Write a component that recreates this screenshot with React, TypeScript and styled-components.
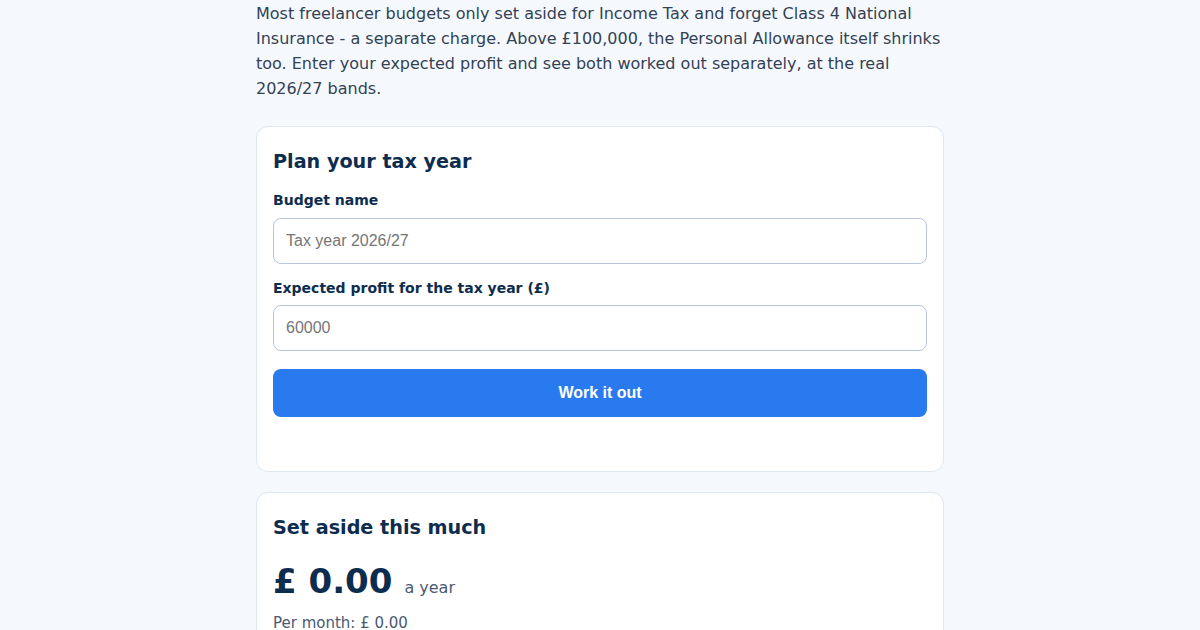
import styled, { createGlobalStyle } from 'styled-components'

const GlobalStyle = createGlobalStyle`
  * {
    box-sizing: border-box;
  }
  body {
    margin: 0;
    background: #f5f9fd;
    font-family: 'DejaVu Sans', sans-serif;
    color: #334155;
  }
`

function App() {
  return (
    <>
      <GlobalStyle />
      <PageStyled>
        <IntroStyled>
          Most freelancer budgets only set aside for Income Tax and forget Class 4 National
          Insurance - a separate charge. Above £100,000, the Personal Allowance itself shrinks
          too. Enter your expected profit and see both worked out separately, at the real
          2026/27 bands.
        </IntroStyled>

        <CardStyled $bottom={54}>
          <CardTitleStyled>Plan your tax year</CardTitleStyled>
          <FieldStyled>
            <LabelStyled htmlFor='budget-name'>Budget name</LabelStyled>
            <InputStyled id='budget-name' type='text' placeholder='Tax year 2026/27' />
          </FieldStyled>
          <FieldStyled>
            <LabelStyled htmlFor='profit'>Expected profit for the tax year (£)</LabelStyled>
            <InputStyled id='profit' type='number' placeholder='60000' />
          </FieldStyled>
          <ButtonStyled type='button'>Work it out</ButtonStyled>
        </CardStyled>

        <CardStyled $bottom={20}>
          <CardTitleStyled>Set aside this much</CardTitleStyled>
          <TotalRowStyled>
            <AmountStyled>£ 0.00</AmountStyled>
            <PeriodStyled>a year</PeriodStyled>
          </TotalRowStyled>
          <SubLineStyled>Per month: £ 0.00</SubLineStyled>
        </CardStyled>
      </PageStyled>
    </>
  )
}

const PageStyled = styled.main`
  width: 688px;
  margin: 0 auto;
  padding-top: 1px;
  display: flex;
  flex-direction: column;
  gap: 20px;
`

const IntroStyled = styled.p`
  margin: 0 0 5px;
  font-size: 16px;
  line-height: 25px;
  color: #334155;
`

const CardStyled = styled.section<{ $bottom: number }>`
  background: #ffffff;
  border: 1px solid #dfe7f1;
  border-radius: 12px;
  padding: 21px 16px ${(p) => p.$bottom}px;
  display: flex;
  flex-direction: column;
`

const CardTitleStyled = styled.h2`
  margin: 0 0 14px;
  font-size: 19.2px;
  line-height: 28px;
  font-weight: 700;
  color: #0e2d4e;
`

const FieldStyled = styled.div`
  display: flex;
  flex-direction: column;
  margin-bottom: 14px;

  & + & {
    margin-bottom: 18px;
  }

  & + & > label {
    margin-bottom: 7px;
  }
`

const LabelStyled = styled.label`
  font-size: 14px;
  line-height: 20px;
  font-weight: 700;
  color: #0e2d4e;
  margin-bottom: 8px;
`

const InputStyled = styled.input`
  height: 46px;
  padding: 0 12px;
  border: 1px solid #b9c5da;
  border-radius: 8px;
  background: #ffffff;
  font-family: 'Liberation Sans', Arial, sans-serif;
  font-size: 16px;
  color: #1e293b;
  outline: none;
  appearance: textfield;

  &::placeholder {
    color: #767676;
  }

  &::-webkit-outer-spin-button,
  &::-webkit-inner-spin-button {
    -webkit-appearance: none;
    margin: 0;
  }
`

const ButtonStyled = styled.button`
  height: 48px;
  border: none;
  border-radius: 8px;
  background: #2a7aef;
  color: #ffffff;
  font-family: 'Liberation Sans', Arial, sans-serif;
  font-size: 16px;
  font-weight: 700;
  cursor: pointer;
`

const TotalRowStyled = styled.div`
  display: flex;
  align-items: baseline;
  gap: 12px;
  margin-top: 5px;
`

const AmountStyled = styled.span`
  font-size: 34px;
  line-height: 41px;
  font-weight: 700;
  color: #0e2d4e;
`

const PeriodStyled = styled.span`
  font-size: 16px;
  color: #4a5a73;
`

const SubLineStyled = styled.p`
  margin: 9px 0 0;
  font-size: 15px;
  line-height: 24px;
  color: #4a5a73;
`

export default App
